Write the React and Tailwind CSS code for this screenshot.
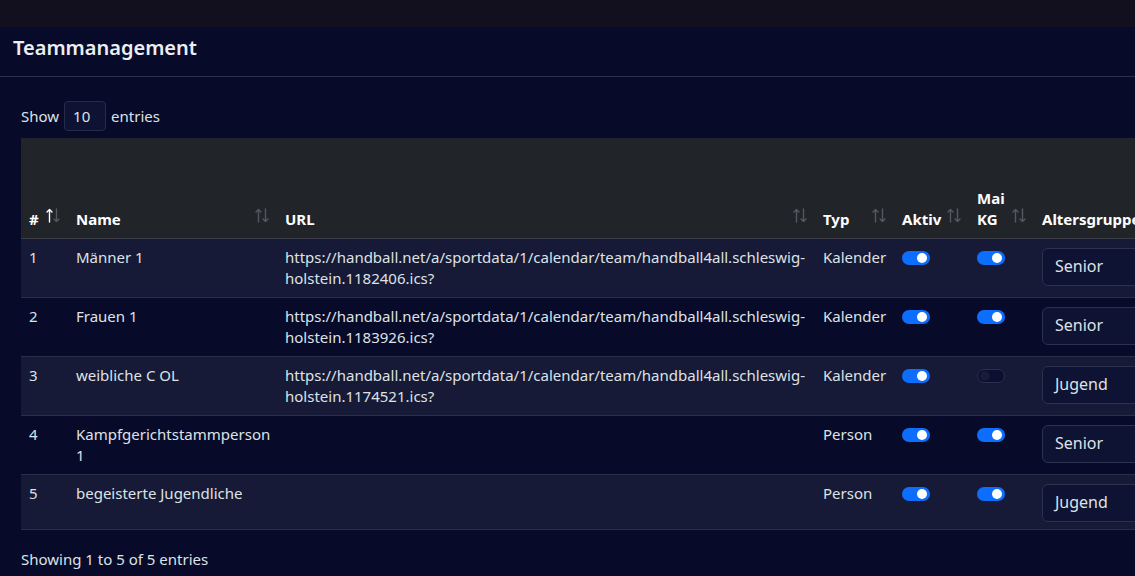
const rows = [
  { id: 1, name: "Männer 1", url: "https://handball.net/a/sportdata/1/calendar/team/handball4all.schleswig-holstein.1182406.ics?", typ: "Kalender", aktiv: true, kg: true, gruppe: "Senior" },
  { id: 2, name: "Frauen 1", url: "https://handball.net/a/sportdata/1/calendar/team/handball4all.schleswig-holstein.1183926.ics?", typ: "Kalender", aktiv: true, kg: true, gruppe: "Senior" },
  { id: 3, name: "weibliche C OL", url: "https://handball.net/a/sportdata/1/calendar/team/handball4all.schleswig-holstein.1174521.ics?", typ: "Kalender", aktiv: true, kg: false, gruppe: "Jugend" },
  { id: 4, name: "Kampfgerichtstammperson 1", url: "", typ: "Person", aktiv: true, kg: true, gruppe: "Senior" },
  { id: 5, name: "begeisterte Jugendliche", url: "", typ: "Person", aktiv: true, kg: true, gruppe: "Jugend" },
];

function SortIcon({ active }) {
  return (
    <svg width="14" height="15" viewBox="0 0 14 15" className="absolute right-[8px] bottom-[15px]">
      <g fill="none" strokeWidth="1.4" strokeLinecap="round" strokeLinejoin="round">
        <path d="M3.5 14V1.5M1 4l2.5-2.5L6 4" stroke={active ? "#ffffff" : "#55585e"} />
        <path d="M10.5 1v12.5M8 11l2.5 2.5L13 11" stroke="#55585e" />
      </g>
    </svg>
  );
}

function Th({ children, active }) {
  return (
    <th className="relative px-2 pr-[30px] pb-2 text-left align-bottom font-bold text-white">
      {children}
      <SortIcon active={active} />
    </th>
  );
}

function Toggle({ on }) {
  return on ? (
    <span className="flex h-[14px] w-[28px] items-center justify-end rounded-full bg-[#0d6efd] pr-[3px]">
      <span className="h-[10px] w-[10px] rounded-full bg-white" />
    </span>
  ) : (
    <span className="flex h-[14px] w-[28px] items-center rounded-full border border-[#2c3150] bg-[#0b1031] pl-[2px]">
      <span className="h-[10px] w-[10px] rounded-full bg-[#171c38]" />
    </span>
  );
}

export default function App() {
  return (
    <div className="min-h-[576px] w-[1135px] overflow-hidden bg-[#070b29] text-[15px] leading-[21px] text-[#dee2e6]" style={{ fontFamily: '"Noto Sans", "Open Sans", sans-serif' }}>
      <div className="h-[27px] bg-[#120f1e]" />
      <div className="h-[50px] border-b border-[#2c2f4a] px-[13px] pt-[7px]">
        <h1 className="text-[20px] leading-[28px] font-semibold text-[#eceef3]">Teammanagement</h1>
      </div>
      <div className="px-[21px]">
        <div className="mt-[24px] flex items-center gap-[5px]">
          <span>Show</span>
          <span className="flex h-[30px] w-[42px] items-center rounded-[4px] border border-[#262b47] bg-[#0e1333] pl-[8px]">10</span>
          <span>entries</span>
        </div>
        <table className="mt-[7px] table-fixed border-collapse" style={{ width: 1300 }}>
          <colgroup>
            <col style={{ width: 47 }} />
            <col style={{ width: 209 }} />
            <col style={{ width: 538 }} />
            <col style={{ width: 79 }} />
            <col style={{ width: 75 }} />
            <col style={{ width: 65 }} />
            <col style={{ width: 287 }} />
          </colgroup>
          <thead>
            <tr className="h-[100px] border-b border-[#3a3d47] bg-[#212429]">
              <Th active>#</Th>
              <Th>Name</Th>
              <Th>URL</Th>
              <Th>Typ</Th>
              <Th>Aktiv</Th>
              <Th>Mai KG</Th>
              <Th>Altersgruppe</Th>
            </tr>
          </thead>
          <tbody>
            {rows.map((r, i) => (
              <tr key={r.id} className={`border-b border-[#2b2e47] align-top ${i % 2 === 0 ? "bg-[#161a36]" : "bg-[#070b29]"}`}>
                <td className="px-2 pt-2 pb-2">{r.id}</td>
                <td className="px-2 pt-2 pb-2">{r.name}</td>
                <td className="px-2 pt-2 pb-2 break-words">{r.url}</td>
                <td className="px-2 pt-2 pb-2">{r.typ}</td>
                <td className="px-2 pt-[12px]"><Toggle on={r.aktiv} /></td>
                <td className="px-2 pt-[12px]"><Toggle on={r.kg} /></td>
                <td className="px-2 pt-[9px] pb-[7px]">
                  <div className="flex h-[38px] w-[160px] items-center justify-between rounded-[6px] border border-[#2c3150] bg-[#0e1333] px-[12px] text-[16px] text-[#dee2e6]">
                    <span>{r.gruppe}</span>
                    <svg width="12" height="12" viewBox="0 0 16 16"><path d="M2 5l6 6 6-6" fill="none" stroke="#dee2e6" strokeWidth="2" /></svg>
                  </div>
                </td>
              </tr>
            ))}
          </tbody>
        </table>
        <div className="mt-[19px]">Showing 1 to 5 of 5 entries</div>
      </div>
    </div>
  );
}
